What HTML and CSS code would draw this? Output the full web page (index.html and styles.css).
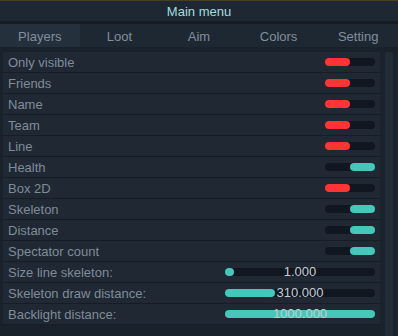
FILE: index.html
```html
<!DOCTYPE html>
<html>
<head>
  <title>Main menu</title>
  <meta name="viewport" content="width=device-width, initial-scale=1.0">
  <link rel="stylesheet" href="styles.css">
</head>
<body>
  <div class="menu">
    <div class="title">Main menu</div>
    <div class="tabs">
      <div class="tab active">Players</div>
      <div class="tab">Loot</div>
      <div class="tab">Aim</div>
      <div class="tab">Colors</div>
      <div class="tab">Setting</div>
    </div>
    <div class="content">
      <div class="list">
        <div class="row"><span class="label">Only visible</span><span class="toggle"><span class="knob"></span></span></div>
        <div class="row"><span class="label">Friends</span><span class="toggle"><span class="knob"></span></span></div>
        <div class="row"><span class="label">Name</span><span class="toggle"><span class="knob"></span></span></div>
        <div class="row"><span class="label">Team</span><span class="toggle"><span class="knob"></span></span></div>
        <div class="row"><span class="label">Line</span><span class="toggle"><span class="knob"></span></span></div>
        <div class="row"><span class="label">Health</span><span class="toggle on"><span class="knob"></span></span></div>
        <div class="row"><span class="label">Box 2D</span><span class="toggle"><span class="knob"></span></span></div>
        <div class="row"><span class="label">Skeleton</span><span class="toggle on"><span class="knob"></span></span></div>
        <div class="row"><span class="label">Distance</span><span class="toggle on"><span class="knob"></span></span></div>
        <div class="row"><span class="label">Spectator count</span><span class="toggle on"><span class="knob"></span></span></div>
        <div class="row"><span class="label">Size line skeleton:</span><span class="slider"><span class="fill" style="width: 9px"></span><span class="value">1.000</span></span></div>
        <div class="row"><span class="label">Skeleton draw distance:</span><span class="slider"><span class="fill" style="width: 50px"></span><span class="value">310.000</span></span></div>
        <div class="row"><span class="label">Backlight distance:</span><span class="slider"><span class="fill" style="width: 150px"></span><span class="value">1000.000</span></span></div>
      </div>
      <div class="scrollbar"><div class="thumb"></div></div>
    </div>
  </div>
</body>
</html>
```

FILE: styles.css
```css
body {
  margin: 0;
  background: #19212a;
  font-family: "Liberation Sans", Arial, sans-serif;
  font-size: 13px;
  color: #808c98;
  width: 398px;
  height: 336px;
  overflow: hidden;
}

.menu {
  border-top: 1px solid #4b3d25;
}

.title {
  height: 20px;
  line-height: 22px;
  text-align: center;
  color: #a6dcdc;
  background: #1e2833;
  border-bottom: 3px solid #151c24;
}

.tabs {
  display: flex;
  height: 23px;
  background: #1e2833;
  margin-bottom: 5px;
}

.tab {
  flex: 1;
  text-align: center;
  line-height: 25px;
  color: #818e9b;
}

.tab.active {
  background: #25303d;
}

.content {
  display: flex;
  padding-left: 3px;
}

.list {
  width: 377px;
}

.row {
  display: flex;
  align-items: center;
  height: 20px;
  padding-left: 5px;
  background: #1f2833;
  border-bottom: 1px solid #161d26;
}

.label {
  flex: 1;
  padding-top: 1px;
}

.toggle {
  position: relative;
  width: 50px;
  height: 8px;
  margin-right: 5px;
  border-radius: 4px;
  background: #101720;
}

.toggle .knob {
  position: absolute;
  left: 0;
  top: 0;
  width: 25px;
  height: 8px;
  border-radius: 4px;
  background: #ff3535;
}

.toggle.on .knob {
  left: 25px;
  background: #45c8b9;
}

.slider {
  position: relative;
  width: 150px;
  height: 8px;
  margin-right: 5px;
  border-radius: 4px;
  background: #101720;
}

.slider .fill {
  position: absolute;
  left: 0;
  top: 0;
  height: 8px;
  border-radius: 4px;
  background: #45c8b9;
}

.slider .value {
  position: absolute;
  left: 0;
  right: 0;
  top: -4px;
  line-height: 16px;
  text-align: center;
  color: #c6ccd2;
}

.scrollbar {
  width: 18px;
  height: 290px;
  background: #1a222c;
}

.thumb {
  margin-left: 5px;
  width: 8px;
  height: 290px;
  border-radius: 3px;
  background: #222c37;
}
```
